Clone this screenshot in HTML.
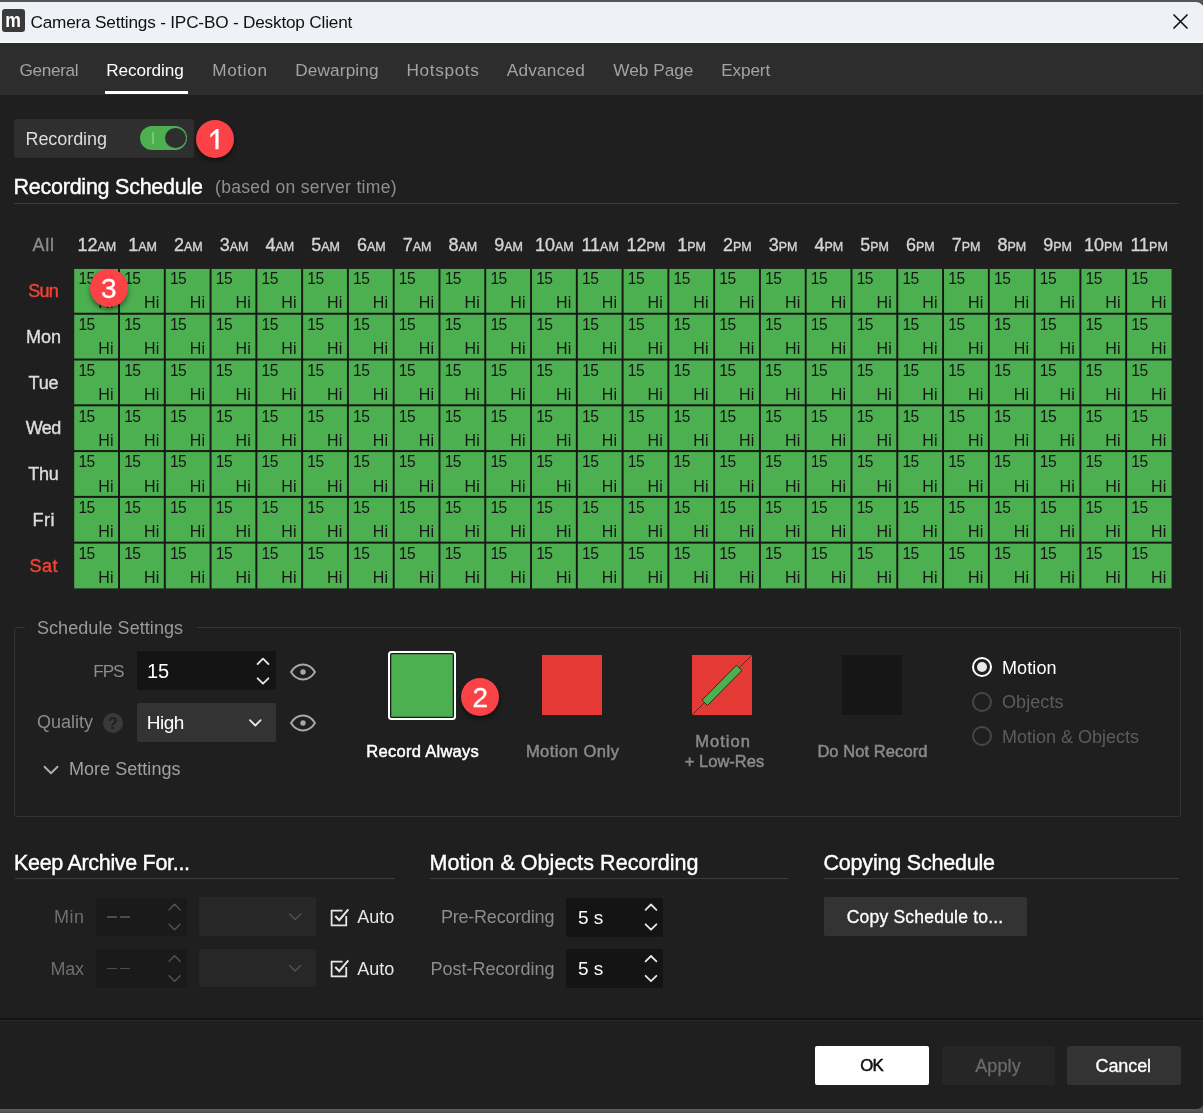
<!DOCTYPE html>
<html><head><meta charset="utf-8"><title>Camera Settings</title>
<style>
html,body{margin:0;padding:0;}
body{width:1203px;height:1113px;overflow:hidden;background:linear-gradient(#555 0,#555 3px,#4d4d4d 3px,#4d4d4d 1108px,#5a5a5a 1109px,#5a5a5a 1111px,#4e4e4e 1112px);position:relative;font-family:"Liberation Sans",sans-serif;}
#ct{position:absolute;left:0;top:0;width:1204px;height:1107px;will-change:transform;}
.t{position:absolute;white-space:nowrap;}
.r{position:absolute;}
svg{position:absolute;overflow:visible;}
#win{position:absolute;left:0;top:2px;width:1203.6px;height:1106.8px;background:#1f1f1f;border-radius:0 8px 8px 0;overflow:hidden;}
.c{position:absolute;width:44px;height:44px;color:#161616;font-size:16px;}
.c i{position:absolute;left:4.2px;top:2.4px;font-style:normal;line-height:16px;letter-spacing:-0.5px;font-size:15.6px;}
.c b{position:absolute;right:4.5px;bottom:1.5px;font-weight:400;line-height:16px;letter-spacing:0.2px;}
</style></head><body>

<div id="win"><div id="ct">
<div class="r" style="left:0px;top:0px;width:1204px;height:39px;background:#eef1f6;border-bottom:2px solid #f9fafc;"></div>
<div class="r" style="left:2px;top:7px;width:23px;height:23px;background:#3a3a3a;border-radius:3px;"></div>
<div class="t" style="top:2.50px;font-size:21px;color:#fff;font-weight:700;line-height:30px;left:-186.7px;width:400px;text-align:center;transform:scaleX(.84);">m</div>
<div class="t" style="top:5.00px;font-size:17.2px;color:#111;font-weight:400;line-height:30px;letter-spacing:-0.194px;left:30.5px;">Camera Settings - IPC-BO - Desktop Client</div>
<svg style="left:1173px;top:12px" width="15" height="15" viewBox="0 0 15 15"><path d="M0.5 0.5L14.5 14.5M14.5 0.5L0.5 14.5" stroke="#111" stroke-width="1.6" fill="none"/></svg>
<div class="r" style="left:0px;top:41px;width:1204px;height:51.5px;background:#2d2d2d;"></div>
<div class="t" style="top:53.00px;font-size:17.2px;color:#a3a3a3;font-weight:400;line-height:30px;letter-spacing:-0.348px;left:19.599999999999998px;">General</div>
<div class="t" style="top:53.00px;font-size:17.2px;color:#fff;font-weight:400;line-height:30px;letter-spacing:-0.087px;left:106.2px;">Recording</div>
<div class="t" style="top:53.00px;font-size:17.2px;color:#a3a3a3;font-weight:400;line-height:30px;letter-spacing:0.636px;left:212.2px;">Motion</div>
<div class="t" style="top:53.00px;font-size:17.2px;color:#a3a3a3;font-weight:400;line-height:30px;letter-spacing:0.16px;left:295.2px;">Dewarping</div>
<div class="t" style="top:53.00px;font-size:17.2px;color:#a3a3a3;font-weight:400;line-height:30px;letter-spacing:0.647px;left:406.5px;">Hotspots</div>
<div class="t" style="top:53.00px;font-size:17.2px;color:#a3a3a3;font-weight:400;line-height:30px;letter-spacing:0.243px;left:506.7px;">Advanced</div>
<div class="t" style="top:53.00px;font-size:17.2px;color:#a3a3a3;font-weight:400;line-height:30px;letter-spacing:0.043px;left:613.2px;">Web Page</div>
<div class="t" style="top:53.00px;font-size:17.2px;color:#a3a3a3;font-weight:400;line-height:30px;letter-spacing:-0.142px;left:721.2px;">Expert</div>
<div class="r" style="left:105px;top:89px;width:83px;height:3px;background:#fff;"></div>
<div class="r" style="left:14px;top:117px;width:179.5px;height:39px;background:#2f2f2f;border-radius:3px;"></div>
<div class="t" style="top:122.00px;font-size:18px;color:#dcdcdc;font-weight:400;line-height:30px;letter-spacing:-0.068px;left:25.5px;">Recording</div>
<div class="r" style="left:140px;top:123.8px;width:47.30000000000001px;height:24.299999999999997px;background:#4caf50;border-radius:12.5px;"></div>
<div class="r" style="left:164.7px;top:125.6px;width:21.0px;height:20.80000000000001px;background:#2e2e2e;border-radius:50%;"></div>
<div class="r" style="left:151.6px;top:130px;width:2.5999999999999943px;height:12.199999999999989px;background:#74c878;border-radius:1px;"></div>
<div class="t" style="top:170.00px;font-size:21.5px;color:#fff;font-weight:400;line-height:30px;letter-spacing:-0.242px;left:13.5px;-webkit-text-stroke:0.4px #fff;">Recording Schedule</div>
<div class="t" style="top:170.00px;font-size:17.5px;color:#8f8f8f;font-weight:400;line-height:30px;letter-spacing:0.307px;left:215px;">(based on server time)</div>
<div class="r" style="left:14px;top:201px;width:1165px;height:1px;background:#3a3a3a;"></div>
<div class="t" style="top:228.00px;font-size:18px;color:#8a8a8a;font-weight:400;line-height:30px;letter-spacing:0.747px;left:-156.3265px;width:400px;text-align:center;-webkit-text-stroke:0.4px #8a8a8a;">All</div>
<div class="t" style="top:228.00px;font-size:18px;color:#d4d4d4;font-weight:400;line-height:30px;left:-103.125px;width:400px;text-align:center;-webkit-text-stroke:0.35px #d4d4d4;">12<span style="font-size:12.5px">AM</span></div>
<div class="t" style="top:228.00px;font-size:18px;color:#d4d4d4;font-weight:400;line-height:30px;left:-57.375px;width:400px;text-align:center;-webkit-text-stroke:0.35px #d4d4d4;">1<span style="font-size:12.5px">AM</span></div>
<div class="t" style="top:228.00px;font-size:18px;color:#d4d4d4;font-weight:400;line-height:30px;left:-11.625px;width:400px;text-align:center;-webkit-text-stroke:0.35px #d4d4d4;">2<span style="font-size:12.5px">AM</span></div>
<div class="t" style="top:228.00px;font-size:18px;color:#d4d4d4;font-weight:400;line-height:30px;left:34.125px;width:400px;text-align:center;-webkit-text-stroke:0.35px #d4d4d4;">3<span style="font-size:12.5px">AM</span></div>
<div class="t" style="top:228.00px;font-size:18px;color:#d4d4d4;font-weight:400;line-height:30px;left:79.875px;width:400px;text-align:center;-webkit-text-stroke:0.35px #d4d4d4;">4<span style="font-size:12.5px">AM</span></div>
<div class="t" style="top:228.00px;font-size:18px;color:#d4d4d4;font-weight:400;line-height:30px;left:125.625px;width:400px;text-align:center;-webkit-text-stroke:0.35px #d4d4d4;">5<span style="font-size:12.5px">AM</span></div>
<div class="t" style="top:228.00px;font-size:18px;color:#d4d4d4;font-weight:400;line-height:30px;left:171.375px;width:400px;text-align:center;-webkit-text-stroke:0.35px #d4d4d4;">6<span style="font-size:12.5px">AM</span></div>
<div class="t" style="top:228.00px;font-size:18px;color:#d4d4d4;font-weight:400;line-height:30px;left:217.125px;width:400px;text-align:center;-webkit-text-stroke:0.35px #d4d4d4;">7<span style="font-size:12.5px">AM</span></div>
<div class="t" style="top:228.00px;font-size:18px;color:#d4d4d4;font-weight:400;line-height:30px;left:262.875px;width:400px;text-align:center;-webkit-text-stroke:0.35px #d4d4d4;">8<span style="font-size:12.5px">AM</span></div>
<div class="t" style="top:228.00px;font-size:18px;color:#d4d4d4;font-weight:400;line-height:30px;left:308.625px;width:400px;text-align:center;-webkit-text-stroke:0.35px #d4d4d4;">9<span style="font-size:12.5px">AM</span></div>
<div class="t" style="top:228.00px;font-size:18px;color:#d4d4d4;font-weight:400;line-height:30px;left:354.375px;width:400px;text-align:center;-webkit-text-stroke:0.35px #d4d4d4;">10<span style="font-size:12.5px">AM</span></div>
<div class="t" style="top:228.00px;font-size:18px;color:#d4d4d4;font-weight:400;line-height:30px;left:400.125px;width:400px;text-align:center;-webkit-text-stroke:0.35px #d4d4d4;">11<span style="font-size:12.5px">AM</span></div>
<div class="t" style="top:228.00px;font-size:18px;color:#d4d4d4;font-weight:400;line-height:30px;left:445.875px;width:400px;text-align:center;-webkit-text-stroke:0.35px #d4d4d4;">12<span style="font-size:12.5px">PM</span></div>
<div class="t" style="top:228.00px;font-size:18px;color:#d4d4d4;font-weight:400;line-height:30px;left:491.625px;width:400px;text-align:center;-webkit-text-stroke:0.35px #d4d4d4;">1<span style="font-size:12.5px">PM</span></div>
<div class="t" style="top:228.00px;font-size:18px;color:#d4d4d4;font-weight:400;line-height:30px;left:537.375px;width:400px;text-align:center;-webkit-text-stroke:0.35px #d4d4d4;">2<span style="font-size:12.5px">PM</span></div>
<div class="t" style="top:228.00px;font-size:18px;color:#d4d4d4;font-weight:400;line-height:30px;left:583.125px;width:400px;text-align:center;-webkit-text-stroke:0.35px #d4d4d4;">3<span style="font-size:12.5px">PM</span></div>
<div class="t" style="top:228.00px;font-size:18px;color:#d4d4d4;font-weight:400;line-height:30px;left:628.875px;width:400px;text-align:center;-webkit-text-stroke:0.35px #d4d4d4;">4<span style="font-size:12.5px">PM</span></div>
<div class="t" style="top:228.00px;font-size:18px;color:#d4d4d4;font-weight:400;line-height:30px;left:674.625px;width:400px;text-align:center;-webkit-text-stroke:0.35px #d4d4d4;">5<span style="font-size:12.5px">PM</span></div>
<div class="t" style="top:228.00px;font-size:18px;color:#d4d4d4;font-weight:400;line-height:30px;left:720.375px;width:400px;text-align:center;-webkit-text-stroke:0.35px #d4d4d4;">6<span style="font-size:12.5px">PM</span></div>
<div class="t" style="top:228.00px;font-size:18px;color:#d4d4d4;font-weight:400;line-height:30px;left:766.125px;width:400px;text-align:center;-webkit-text-stroke:0.35px #d4d4d4;">7<span style="font-size:12.5px">PM</span></div>
<div class="t" style="top:228.00px;font-size:18px;color:#d4d4d4;font-weight:400;line-height:30px;left:811.875px;width:400px;text-align:center;-webkit-text-stroke:0.35px #d4d4d4;">8<span style="font-size:12.5px">PM</span></div>
<div class="t" style="top:228.00px;font-size:18px;color:#d4d4d4;font-weight:400;line-height:30px;left:857.625px;width:400px;text-align:center;-webkit-text-stroke:0.35px #d4d4d4;">9<span style="font-size:12.5px">PM</span></div>
<div class="t" style="top:228.00px;font-size:18px;color:#d4d4d4;font-weight:400;line-height:30px;left:903.375px;width:400px;text-align:center;-webkit-text-stroke:0.35px #d4d4d4;">10<span style="font-size:12.5px">PM</span></div>
<div class="t" style="top:228.00px;font-size:18px;color:#d4d4d4;font-weight:400;line-height:30px;left:949.125px;width:400px;text-align:center;-webkit-text-stroke:0.35px #d4d4d4;">11<span style="font-size:12.5px">PM</span></div>
<div class="r" style="left:74.5px;top:267.5px;width:1097.0px;height:318.5px;background:#171717;"></div>
<svg style="left:0;top:0" width="1203" height="700"><rect x="74.20" y="266.95" width="43.85" height="43.80" fill="#4caf50"/><rect x="119.98" y="266.95" width="43.85" height="43.80" fill="#4caf50"/><rect x="165.76" y="266.95" width="43.85" height="43.80" fill="#4caf50"/><rect x="211.54" y="266.95" width="43.85" height="43.80" fill="#4caf50"/><rect x="257.32" y="266.95" width="43.85" height="43.80" fill="#4caf50"/><rect x="303.10" y="266.95" width="43.85" height="43.80" fill="#4caf50"/><rect x="348.88" y="266.95" width="43.85" height="43.80" fill="#4caf50"/><rect x="394.66" y="266.95" width="43.85" height="43.80" fill="#4caf50"/><rect x="440.44" y="266.95" width="43.85" height="43.80" fill="#4caf50"/><rect x="486.22" y="266.95" width="43.85" height="43.80" fill="#4caf50"/><rect x="532.00" y="266.95" width="43.85" height="43.80" fill="#4caf50"/><rect x="577.78" y="266.95" width="43.85" height="43.80" fill="#4caf50"/><rect x="623.56" y="266.95" width="43.85" height="43.80" fill="#4caf50"/><rect x="669.34" y="266.95" width="43.85" height="43.80" fill="#4caf50"/><rect x="715.12" y="266.95" width="43.85" height="43.80" fill="#4caf50"/><rect x="760.90" y="266.95" width="43.85" height="43.80" fill="#4caf50"/><rect x="806.68" y="266.95" width="43.85" height="43.80" fill="#4caf50"/><rect x="852.46" y="266.95" width="43.85" height="43.80" fill="#4caf50"/><rect x="898.24" y="266.95" width="43.85" height="43.80" fill="#4caf50"/><rect x="944.02" y="266.95" width="43.85" height="43.80" fill="#4caf50"/><rect x="989.80" y="266.95" width="43.85" height="43.80" fill="#4caf50"/><rect x="1035.58" y="266.95" width="43.85" height="43.80" fill="#4caf50"/><rect x="1081.36" y="266.95" width="43.85" height="43.80" fill="#4caf50"/><rect x="1127.14" y="266.95" width="44.46" height="43.80" fill="#4caf50"/><rect x="74.20" y="312.73" width="43.85" height="43.80" fill="#4caf50"/><rect x="119.98" y="312.73" width="43.85" height="43.80" fill="#4caf50"/><rect x="165.76" y="312.73" width="43.85" height="43.80" fill="#4caf50"/><rect x="211.54" y="312.73" width="43.85" height="43.80" fill="#4caf50"/><rect x="257.32" y="312.73" width="43.85" height="43.80" fill="#4caf50"/><rect x="303.10" y="312.73" width="43.85" height="43.80" fill="#4caf50"/><rect x="348.88" y="312.73" width="43.85" height="43.80" fill="#4caf50"/><rect x="394.66" y="312.73" width="43.85" height="43.80" fill="#4caf50"/><rect x="440.44" y="312.73" width="43.85" height="43.80" fill="#4caf50"/><rect x="486.22" y="312.73" width="43.85" height="43.80" fill="#4caf50"/><rect x="532.00" y="312.73" width="43.85" height="43.80" fill="#4caf50"/><rect x="577.78" y="312.73" width="43.85" height="43.80" fill="#4caf50"/><rect x="623.56" y="312.73" width="43.85" height="43.80" fill="#4caf50"/><rect x="669.34" y="312.73" width="43.85" height="43.80" fill="#4caf50"/><rect x="715.12" y="312.73" width="43.85" height="43.80" fill="#4caf50"/><rect x="760.90" y="312.73" width="43.85" height="43.80" fill="#4caf50"/><rect x="806.68" y="312.73" width="43.85" height="43.80" fill="#4caf50"/><rect x="852.46" y="312.73" width="43.85" height="43.80" fill="#4caf50"/><rect x="898.24" y="312.73" width="43.85" height="43.80" fill="#4caf50"/><rect x="944.02" y="312.73" width="43.85" height="43.80" fill="#4caf50"/><rect x="989.80" y="312.73" width="43.85" height="43.80" fill="#4caf50"/><rect x="1035.58" y="312.73" width="43.85" height="43.80" fill="#4caf50"/><rect x="1081.36" y="312.73" width="43.85" height="43.80" fill="#4caf50"/><rect x="1127.14" y="312.73" width="44.46" height="43.80" fill="#4caf50"/><rect x="74.20" y="358.51" width="43.85" height="43.80" fill="#4caf50"/><rect x="119.98" y="358.51" width="43.85" height="43.80" fill="#4caf50"/><rect x="165.76" y="358.51" width="43.85" height="43.80" fill="#4caf50"/><rect x="211.54" y="358.51" width="43.85" height="43.80" fill="#4caf50"/><rect x="257.32" y="358.51" width="43.85" height="43.80" fill="#4caf50"/><rect x="303.10" y="358.51" width="43.85" height="43.80" fill="#4caf50"/><rect x="348.88" y="358.51" width="43.85" height="43.80" fill="#4caf50"/><rect x="394.66" y="358.51" width="43.85" height="43.80" fill="#4caf50"/><rect x="440.44" y="358.51" width="43.85" height="43.80" fill="#4caf50"/><rect x="486.22" y="358.51" width="43.85" height="43.80" fill="#4caf50"/><rect x="532.00" y="358.51" width="43.85" height="43.80" fill="#4caf50"/><rect x="577.78" y="358.51" width="43.85" height="43.80" fill="#4caf50"/><rect x="623.56" y="358.51" width="43.85" height="43.80" fill="#4caf50"/><rect x="669.34" y="358.51" width="43.85" height="43.80" fill="#4caf50"/><rect x="715.12" y="358.51" width="43.85" height="43.80" fill="#4caf50"/><rect x="760.90" y="358.51" width="43.85" height="43.80" fill="#4caf50"/><rect x="806.68" y="358.51" width="43.85" height="43.80" fill="#4caf50"/><rect x="852.46" y="358.51" width="43.85" height="43.80" fill="#4caf50"/><rect x="898.24" y="358.51" width="43.85" height="43.80" fill="#4caf50"/><rect x="944.02" y="358.51" width="43.85" height="43.80" fill="#4caf50"/><rect x="989.80" y="358.51" width="43.85" height="43.80" fill="#4caf50"/><rect x="1035.58" y="358.51" width="43.85" height="43.80" fill="#4caf50"/><rect x="1081.36" y="358.51" width="43.85" height="43.80" fill="#4caf50"/><rect x="1127.14" y="358.51" width="44.46" height="43.80" fill="#4caf50"/><rect x="74.20" y="404.29" width="43.85" height="43.80" fill="#4caf50"/><rect x="119.98" y="404.29" width="43.85" height="43.80" fill="#4caf50"/><rect x="165.76" y="404.29" width="43.85" height="43.80" fill="#4caf50"/><rect x="211.54" y="404.29" width="43.85" height="43.80" fill="#4caf50"/><rect x="257.32" y="404.29" width="43.85" height="43.80" fill="#4caf50"/><rect x="303.10" y="404.29" width="43.85" height="43.80" fill="#4caf50"/><rect x="348.88" y="404.29" width="43.85" height="43.80" fill="#4caf50"/><rect x="394.66" y="404.29" width="43.85" height="43.80" fill="#4caf50"/><rect x="440.44" y="404.29" width="43.85" height="43.80" fill="#4caf50"/><rect x="486.22" y="404.29" width="43.85" height="43.80" fill="#4caf50"/><rect x="532.00" y="404.29" width="43.85" height="43.80" fill="#4caf50"/><rect x="577.78" y="404.29" width="43.85" height="43.80" fill="#4caf50"/><rect x="623.56" y="404.29" width="43.85" height="43.80" fill="#4caf50"/><rect x="669.34" y="404.29" width="43.85" height="43.80" fill="#4caf50"/><rect x="715.12" y="404.29" width="43.85" height="43.80" fill="#4caf50"/><rect x="760.90" y="404.29" width="43.85" height="43.80" fill="#4caf50"/><rect x="806.68" y="404.29" width="43.85" height="43.80" fill="#4caf50"/><rect x="852.46" y="404.29" width="43.85" height="43.80" fill="#4caf50"/><rect x="898.24" y="404.29" width="43.85" height="43.80" fill="#4caf50"/><rect x="944.02" y="404.29" width="43.85" height="43.80" fill="#4caf50"/><rect x="989.80" y="404.29" width="43.85" height="43.80" fill="#4caf50"/><rect x="1035.58" y="404.29" width="43.85" height="43.80" fill="#4caf50"/><rect x="1081.36" y="404.29" width="43.85" height="43.80" fill="#4caf50"/><rect x="1127.14" y="404.29" width="44.46" height="43.80" fill="#4caf50"/><rect x="74.20" y="450.07" width="43.85" height="43.80" fill="#4caf50"/><rect x="119.98" y="450.07" width="43.85" height="43.80" fill="#4caf50"/><rect x="165.76" y="450.07" width="43.85" height="43.80" fill="#4caf50"/><rect x="211.54" y="450.07" width="43.85" height="43.80" fill="#4caf50"/><rect x="257.32" y="450.07" width="43.85" height="43.80" fill="#4caf50"/><rect x="303.10" y="450.07" width="43.85" height="43.80" fill="#4caf50"/><rect x="348.88" y="450.07" width="43.85" height="43.80" fill="#4caf50"/><rect x="394.66" y="450.07" width="43.85" height="43.80" fill="#4caf50"/><rect x="440.44" y="450.07" width="43.85" height="43.80" fill="#4caf50"/><rect x="486.22" y="450.07" width="43.85" height="43.80" fill="#4caf50"/><rect x="532.00" y="450.07" width="43.85" height="43.80" fill="#4caf50"/><rect x="577.78" y="450.07" width="43.85" height="43.80" fill="#4caf50"/><rect x="623.56" y="450.07" width="43.85" height="43.80" fill="#4caf50"/><rect x="669.34" y="450.07" width="43.85" height="43.80" fill="#4caf50"/><rect x="715.12" y="450.07" width="43.85" height="43.80" fill="#4caf50"/><rect x="760.90" y="450.07" width="43.85" height="43.80" fill="#4caf50"/><rect x="806.68" y="450.07" width="43.85" height="43.80" fill="#4caf50"/><rect x="852.46" y="450.07" width="43.85" height="43.80" fill="#4caf50"/><rect x="898.24" y="450.07" width="43.85" height="43.80" fill="#4caf50"/><rect x="944.02" y="450.07" width="43.85" height="43.80" fill="#4caf50"/><rect x="989.80" y="450.07" width="43.85" height="43.80" fill="#4caf50"/><rect x="1035.58" y="450.07" width="43.85" height="43.80" fill="#4caf50"/><rect x="1081.36" y="450.07" width="43.85" height="43.80" fill="#4caf50"/><rect x="1127.14" y="450.07" width="44.46" height="43.80" fill="#4caf50"/><rect x="74.20" y="495.85" width="43.85" height="43.80" fill="#4caf50"/><rect x="119.98" y="495.85" width="43.85" height="43.80" fill="#4caf50"/><rect x="165.76" y="495.85" width="43.85" height="43.80" fill="#4caf50"/><rect x="211.54" y="495.85" width="43.85" height="43.80" fill="#4caf50"/><rect x="257.32" y="495.85" width="43.85" height="43.80" fill="#4caf50"/><rect x="303.10" y="495.85" width="43.85" height="43.80" fill="#4caf50"/><rect x="348.88" y="495.85" width="43.85" height="43.80" fill="#4caf50"/><rect x="394.66" y="495.85" width="43.85" height="43.80" fill="#4caf50"/><rect x="440.44" y="495.85" width="43.85" height="43.80" fill="#4caf50"/><rect x="486.22" y="495.85" width="43.85" height="43.80" fill="#4caf50"/><rect x="532.00" y="495.85" width="43.85" height="43.80" fill="#4caf50"/><rect x="577.78" y="495.85" width="43.85" height="43.80" fill="#4caf50"/><rect x="623.56" y="495.85" width="43.85" height="43.80" fill="#4caf50"/><rect x="669.34" y="495.85" width="43.85" height="43.80" fill="#4caf50"/><rect x="715.12" y="495.85" width="43.85" height="43.80" fill="#4caf50"/><rect x="760.90" y="495.85" width="43.85" height="43.80" fill="#4caf50"/><rect x="806.68" y="495.85" width="43.85" height="43.80" fill="#4caf50"/><rect x="852.46" y="495.85" width="43.85" height="43.80" fill="#4caf50"/><rect x="898.24" y="495.85" width="43.85" height="43.80" fill="#4caf50"/><rect x="944.02" y="495.85" width="43.85" height="43.80" fill="#4caf50"/><rect x="989.80" y="495.85" width="43.85" height="43.80" fill="#4caf50"/><rect x="1035.58" y="495.85" width="43.85" height="43.80" fill="#4caf50"/><rect x="1081.36" y="495.85" width="43.85" height="43.80" fill="#4caf50"/><rect x="1127.14" y="495.85" width="44.46" height="43.80" fill="#4caf50"/><rect x="74.20" y="541.63" width="43.85" height="44.77" fill="#4caf50"/><rect x="119.98" y="541.63" width="43.85" height="44.77" fill="#4caf50"/><rect x="165.76" y="541.63" width="43.85" height="44.77" fill="#4caf50"/><rect x="211.54" y="541.63" width="43.85" height="44.77" fill="#4caf50"/><rect x="257.32" y="541.63" width="43.85" height="44.77" fill="#4caf50"/><rect x="303.10" y="541.63" width="43.85" height="44.77" fill="#4caf50"/><rect x="348.88" y="541.63" width="43.85" height="44.77" fill="#4caf50"/><rect x="394.66" y="541.63" width="43.85" height="44.77" fill="#4caf50"/><rect x="440.44" y="541.63" width="43.85" height="44.77" fill="#4caf50"/><rect x="486.22" y="541.63" width="43.85" height="44.77" fill="#4caf50"/><rect x="532.00" y="541.63" width="43.85" height="44.77" fill="#4caf50"/><rect x="577.78" y="541.63" width="43.85" height="44.77" fill="#4caf50"/><rect x="623.56" y="541.63" width="43.85" height="44.77" fill="#4caf50"/><rect x="669.34" y="541.63" width="43.85" height="44.77" fill="#4caf50"/><rect x="715.12" y="541.63" width="43.85" height="44.77" fill="#4caf50"/><rect x="760.90" y="541.63" width="43.85" height="44.77" fill="#4caf50"/><rect x="806.68" y="541.63" width="43.85" height="44.77" fill="#4caf50"/><rect x="852.46" y="541.63" width="43.85" height="44.77" fill="#4caf50"/><rect x="898.24" y="541.63" width="43.85" height="44.77" fill="#4caf50"/><rect x="944.02" y="541.63" width="43.85" height="44.77" fill="#4caf50"/><rect x="989.80" y="541.63" width="43.85" height="44.77" fill="#4caf50"/><rect x="1035.58" y="541.63" width="43.85" height="44.77" fill="#4caf50"/><rect x="1081.36" y="541.63" width="43.85" height="44.77" fill="#4caf50"/><rect x="1127.14" y="541.63" width="44.46" height="44.77" fill="#4caf50"/></svg>
<div class="t" style="top:274.15px;font-size:18px;color:#f44336;font-weight:400;line-height:30px;letter-spacing:-0.863px;left:-156.9315px;width:400px;text-align:center;-webkit-text-stroke:0.4px #f44336;">Sun</div>
<div class="c" style="left:74.20px;top:266.95px;"><i>15</i><b>Hi</b></div>
<div class="c" style="left:119.98px;top:266.95px;"><i>15</i><b>Hi</b></div>
<div class="c" style="left:165.76px;top:266.95px;"><i>15</i><b>Hi</b></div>
<div class="c" style="left:211.54px;top:266.95px;"><i>15</i><b>Hi</b></div>
<div class="c" style="left:257.32px;top:266.95px;"><i>15</i><b>Hi</b></div>
<div class="c" style="left:303.10px;top:266.95px;"><i>15</i><b>Hi</b></div>
<div class="c" style="left:348.88px;top:266.95px;"><i>15</i><b>Hi</b></div>
<div class="c" style="left:394.66px;top:266.95px;"><i>15</i><b>Hi</b></div>
<div class="c" style="left:440.44px;top:266.95px;"><i>15</i><b>Hi</b></div>
<div class="c" style="left:486.22px;top:266.95px;"><i>15</i><b>Hi</b></div>
<div class="c" style="left:532.00px;top:266.95px;"><i>15</i><b>Hi</b></div>
<div class="c" style="left:577.78px;top:266.95px;"><i>15</i><b>Hi</b></div>
<div class="c" style="left:623.56px;top:266.95px;"><i>15</i><b>Hi</b></div>
<div class="c" style="left:669.34px;top:266.95px;"><i>15</i><b>Hi</b></div>
<div class="c" style="left:715.12px;top:266.95px;"><i>15</i><b>Hi</b></div>
<div class="c" style="left:760.90px;top:266.95px;"><i>15</i><b>Hi</b></div>
<div class="c" style="left:806.68px;top:266.95px;"><i>15</i><b>Hi</b></div>
<div class="c" style="left:852.46px;top:266.95px;"><i>15</i><b>Hi</b></div>
<div class="c" style="left:898.24px;top:266.95px;"><i>15</i><b>Hi</b></div>
<div class="c" style="left:944.02px;top:266.95px;"><i>15</i><b>Hi</b></div>
<div class="c" style="left:989.80px;top:266.95px;"><i>15</i><b>Hi</b></div>
<div class="c" style="left:1035.58px;top:266.95px;"><i>15</i><b>Hi</b></div>
<div class="c" style="left:1081.36px;top:266.95px;"><i>15</i><b>Hi</b></div>
<div class="c" style="left:1127.14px;top:266.95px;"><i>15</i><b>Hi</b></div>
<div class="t" style="top:319.93px;font-size:18px;color:#dcdcdc;font-weight:400;line-height:30px;letter-spacing:-0.006px;left:-156.503px;width:400px;text-align:center;-webkit-text-stroke:0.4px #dcdcdc;">Mon</div>
<div class="c" style="left:74.20px;top:312.73px;"><i>15</i><b>Hi</b></div>
<div class="c" style="left:119.98px;top:312.73px;"><i>15</i><b>Hi</b></div>
<div class="c" style="left:165.76px;top:312.73px;"><i>15</i><b>Hi</b></div>
<div class="c" style="left:211.54px;top:312.73px;"><i>15</i><b>Hi</b></div>
<div class="c" style="left:257.32px;top:312.73px;"><i>15</i><b>Hi</b></div>
<div class="c" style="left:303.10px;top:312.73px;"><i>15</i><b>Hi</b></div>
<div class="c" style="left:348.88px;top:312.73px;"><i>15</i><b>Hi</b></div>
<div class="c" style="left:394.66px;top:312.73px;"><i>15</i><b>Hi</b></div>
<div class="c" style="left:440.44px;top:312.73px;"><i>15</i><b>Hi</b></div>
<div class="c" style="left:486.22px;top:312.73px;"><i>15</i><b>Hi</b></div>
<div class="c" style="left:532.00px;top:312.73px;"><i>15</i><b>Hi</b></div>
<div class="c" style="left:577.78px;top:312.73px;"><i>15</i><b>Hi</b></div>
<div class="c" style="left:623.56px;top:312.73px;"><i>15</i><b>Hi</b></div>
<div class="c" style="left:669.34px;top:312.73px;"><i>15</i><b>Hi</b></div>
<div class="c" style="left:715.12px;top:312.73px;"><i>15</i><b>Hi</b></div>
<div class="c" style="left:760.90px;top:312.73px;"><i>15</i><b>Hi</b></div>
<div class="c" style="left:806.68px;top:312.73px;"><i>15</i><b>Hi</b></div>
<div class="c" style="left:852.46px;top:312.73px;"><i>15</i><b>Hi</b></div>
<div class="c" style="left:898.24px;top:312.73px;"><i>15</i><b>Hi</b></div>
<div class="c" style="left:944.02px;top:312.73px;"><i>15</i><b>Hi</b></div>
<div class="c" style="left:989.80px;top:312.73px;"><i>15</i><b>Hi</b></div>
<div class="c" style="left:1035.58px;top:312.73px;"><i>15</i><b>Hi</b></div>
<div class="c" style="left:1081.36px;top:312.73px;"><i>15</i><b>Hi</b></div>
<div class="c" style="left:1127.14px;top:312.73px;"><i>15</i><b>Hi</b></div>
<div class="t" style="top:365.71px;font-size:18px;color:#dcdcdc;font-weight:400;line-height:30px;letter-spacing:-0.173px;left:-156.5865px;width:400px;text-align:center;-webkit-text-stroke:0.4px #dcdcdc;">Tue</div>
<div class="c" style="left:74.20px;top:358.51px;"><i>15</i><b>Hi</b></div>
<div class="c" style="left:119.98px;top:358.51px;"><i>15</i><b>Hi</b></div>
<div class="c" style="left:165.76px;top:358.51px;"><i>15</i><b>Hi</b></div>
<div class="c" style="left:211.54px;top:358.51px;"><i>15</i><b>Hi</b></div>
<div class="c" style="left:257.32px;top:358.51px;"><i>15</i><b>Hi</b></div>
<div class="c" style="left:303.10px;top:358.51px;"><i>15</i><b>Hi</b></div>
<div class="c" style="left:348.88px;top:358.51px;"><i>15</i><b>Hi</b></div>
<div class="c" style="left:394.66px;top:358.51px;"><i>15</i><b>Hi</b></div>
<div class="c" style="left:440.44px;top:358.51px;"><i>15</i><b>Hi</b></div>
<div class="c" style="left:486.22px;top:358.51px;"><i>15</i><b>Hi</b></div>
<div class="c" style="left:532.00px;top:358.51px;"><i>15</i><b>Hi</b></div>
<div class="c" style="left:577.78px;top:358.51px;"><i>15</i><b>Hi</b></div>
<div class="c" style="left:623.56px;top:358.51px;"><i>15</i><b>Hi</b></div>
<div class="c" style="left:669.34px;top:358.51px;"><i>15</i><b>Hi</b></div>
<div class="c" style="left:715.12px;top:358.51px;"><i>15</i><b>Hi</b></div>
<div class="c" style="left:760.90px;top:358.51px;"><i>15</i><b>Hi</b></div>
<div class="c" style="left:806.68px;top:358.51px;"><i>15</i><b>Hi</b></div>
<div class="c" style="left:852.46px;top:358.51px;"><i>15</i><b>Hi</b></div>
<div class="c" style="left:898.24px;top:358.51px;"><i>15</i><b>Hi</b></div>
<div class="c" style="left:944.02px;top:358.51px;"><i>15</i><b>Hi</b></div>
<div class="c" style="left:989.80px;top:358.51px;"><i>15</i><b>Hi</b></div>
<div class="c" style="left:1035.58px;top:358.51px;"><i>15</i><b>Hi</b></div>
<div class="c" style="left:1081.36px;top:358.51px;"><i>15</i><b>Hi</b></div>
<div class="c" style="left:1127.14px;top:358.51px;"><i>15</i><b>Hi</b></div>
<div class="t" style="top:411.49px;font-size:18px;color:#dcdcdc;font-weight:400;line-height:30px;letter-spacing:-0.542px;left:-156.77100000000002px;width:400px;text-align:center;-webkit-text-stroke:0.4px #dcdcdc;">Wed</div>
<div class="c" style="left:74.20px;top:404.29px;"><i>15</i><b>Hi</b></div>
<div class="c" style="left:119.98px;top:404.29px;"><i>15</i><b>Hi</b></div>
<div class="c" style="left:165.76px;top:404.29px;"><i>15</i><b>Hi</b></div>
<div class="c" style="left:211.54px;top:404.29px;"><i>15</i><b>Hi</b></div>
<div class="c" style="left:257.32px;top:404.29px;"><i>15</i><b>Hi</b></div>
<div class="c" style="left:303.10px;top:404.29px;"><i>15</i><b>Hi</b></div>
<div class="c" style="left:348.88px;top:404.29px;"><i>15</i><b>Hi</b></div>
<div class="c" style="left:394.66px;top:404.29px;"><i>15</i><b>Hi</b></div>
<div class="c" style="left:440.44px;top:404.29px;"><i>15</i><b>Hi</b></div>
<div class="c" style="left:486.22px;top:404.29px;"><i>15</i><b>Hi</b></div>
<div class="c" style="left:532.00px;top:404.29px;"><i>15</i><b>Hi</b></div>
<div class="c" style="left:577.78px;top:404.29px;"><i>15</i><b>Hi</b></div>
<div class="c" style="left:623.56px;top:404.29px;"><i>15</i><b>Hi</b></div>
<div class="c" style="left:669.34px;top:404.29px;"><i>15</i><b>Hi</b></div>
<div class="c" style="left:715.12px;top:404.29px;"><i>15</i><b>Hi</b></div>
<div class="c" style="left:760.90px;top:404.29px;"><i>15</i><b>Hi</b></div>
<div class="c" style="left:806.68px;top:404.29px;"><i>15</i><b>Hi</b></div>
<div class="c" style="left:852.46px;top:404.29px;"><i>15</i><b>Hi</b></div>
<div class="c" style="left:898.24px;top:404.29px;"><i>15</i><b>Hi</b></div>
<div class="c" style="left:944.02px;top:404.29px;"><i>15</i><b>Hi</b></div>
<div class="c" style="left:989.80px;top:404.29px;"><i>15</i><b>Hi</b></div>
<div class="c" style="left:1035.58px;top:404.29px;"><i>15</i><b>Hi</b></div>
<div class="c" style="left:1081.36px;top:404.29px;"><i>15</i><b>Hi</b></div>
<div class="c" style="left:1127.14px;top:404.29px;"><i>15</i><b>Hi</b></div>
<div class="t" style="top:457.27px;font-size:18px;color:#dcdcdc;font-weight:400;line-height:30px;letter-spacing:-0.207px;left:-156.6035px;width:400px;text-align:center;-webkit-text-stroke:0.4px #dcdcdc;">Thu</div>
<div class="c" style="left:74.20px;top:450.07px;"><i>15</i><b>Hi</b></div>
<div class="c" style="left:119.98px;top:450.07px;"><i>15</i><b>Hi</b></div>
<div class="c" style="left:165.76px;top:450.07px;"><i>15</i><b>Hi</b></div>
<div class="c" style="left:211.54px;top:450.07px;"><i>15</i><b>Hi</b></div>
<div class="c" style="left:257.32px;top:450.07px;"><i>15</i><b>Hi</b></div>
<div class="c" style="left:303.10px;top:450.07px;"><i>15</i><b>Hi</b></div>
<div class="c" style="left:348.88px;top:450.07px;"><i>15</i><b>Hi</b></div>
<div class="c" style="left:394.66px;top:450.07px;"><i>15</i><b>Hi</b></div>
<div class="c" style="left:440.44px;top:450.07px;"><i>15</i><b>Hi</b></div>
<div class="c" style="left:486.22px;top:450.07px;"><i>15</i><b>Hi</b></div>
<div class="c" style="left:532.00px;top:450.07px;"><i>15</i><b>Hi</b></div>
<div class="c" style="left:577.78px;top:450.07px;"><i>15</i><b>Hi</b></div>
<div class="c" style="left:623.56px;top:450.07px;"><i>15</i><b>Hi</b></div>
<div class="c" style="left:669.34px;top:450.07px;"><i>15</i><b>Hi</b></div>
<div class="c" style="left:715.12px;top:450.07px;"><i>15</i><b>Hi</b></div>
<div class="c" style="left:760.90px;top:450.07px;"><i>15</i><b>Hi</b></div>
<div class="c" style="left:806.68px;top:450.07px;"><i>15</i><b>Hi</b></div>
<div class="c" style="left:852.46px;top:450.07px;"><i>15</i><b>Hi</b></div>
<div class="c" style="left:898.24px;top:450.07px;"><i>15</i><b>Hi</b></div>
<div class="c" style="left:944.02px;top:450.07px;"><i>15</i><b>Hi</b></div>
<div class="c" style="left:989.80px;top:450.07px;"><i>15</i><b>Hi</b></div>
<div class="c" style="left:1035.58px;top:450.07px;"><i>15</i><b>Hi</b></div>
<div class="c" style="left:1081.36px;top:450.07px;"><i>15</i><b>Hi</b></div>
<div class="c" style="left:1127.14px;top:450.07px;"><i>15</i><b>Hi</b></div>
<div class="t" style="top:503.05px;font-size:18px;color:#dcdcdc;font-weight:400;line-height:30px;letter-spacing:0.407px;left:-156.2965px;width:400px;text-align:center;-webkit-text-stroke:0.4px #dcdcdc;">Fri</div>
<div class="c" style="left:74.20px;top:495.85px;"><i>15</i><b>Hi</b></div>
<div class="c" style="left:119.98px;top:495.85px;"><i>15</i><b>Hi</b></div>
<div class="c" style="left:165.76px;top:495.85px;"><i>15</i><b>Hi</b></div>
<div class="c" style="left:211.54px;top:495.85px;"><i>15</i><b>Hi</b></div>
<div class="c" style="left:257.32px;top:495.85px;"><i>15</i><b>Hi</b></div>
<div class="c" style="left:303.10px;top:495.85px;"><i>15</i><b>Hi</b></div>
<div class="c" style="left:348.88px;top:495.85px;"><i>15</i><b>Hi</b></div>
<div class="c" style="left:394.66px;top:495.85px;"><i>15</i><b>Hi</b></div>
<div class="c" style="left:440.44px;top:495.85px;"><i>15</i><b>Hi</b></div>
<div class="c" style="left:486.22px;top:495.85px;"><i>15</i><b>Hi</b></div>
<div class="c" style="left:532.00px;top:495.85px;"><i>15</i><b>Hi</b></div>
<div class="c" style="left:577.78px;top:495.85px;"><i>15</i><b>Hi</b></div>
<div class="c" style="left:623.56px;top:495.85px;"><i>15</i><b>Hi</b></div>
<div class="c" style="left:669.34px;top:495.85px;"><i>15</i><b>Hi</b></div>
<div class="c" style="left:715.12px;top:495.85px;"><i>15</i><b>Hi</b></div>
<div class="c" style="left:760.90px;top:495.85px;"><i>15</i><b>Hi</b></div>
<div class="c" style="left:806.68px;top:495.85px;"><i>15</i><b>Hi</b></div>
<div class="c" style="left:852.46px;top:495.85px;"><i>15</i><b>Hi</b></div>
<div class="c" style="left:898.24px;top:495.85px;"><i>15</i><b>Hi</b></div>
<div class="c" style="left:944.02px;top:495.85px;"><i>15</i><b>Hi</b></div>
<div class="c" style="left:989.80px;top:495.85px;"><i>15</i><b>Hi</b></div>
<div class="c" style="left:1035.58px;top:495.85px;"><i>15</i><b>Hi</b></div>
<div class="c" style="left:1081.36px;top:495.85px;"><i>15</i><b>Hi</b></div>
<div class="c" style="left:1127.14px;top:495.85px;"><i>15</i><b>Hi</b></div>
<div class="t" style="top:548.83px;font-size:18px;color:#f44336;font-weight:400;line-height:30px;letter-spacing:0.492px;left:-156.254px;width:400px;text-align:center;-webkit-text-stroke:0.4px #f44336;">Sat</div>
<div class="c" style="left:74.20px;top:541.63px;"><i>15</i><b>Hi</b></div>
<div class="c" style="left:119.98px;top:541.63px;"><i>15</i><b>Hi</b></div>
<div class="c" style="left:165.76px;top:541.63px;"><i>15</i><b>Hi</b></div>
<div class="c" style="left:211.54px;top:541.63px;"><i>15</i><b>Hi</b></div>
<div class="c" style="left:257.32px;top:541.63px;"><i>15</i><b>Hi</b></div>
<div class="c" style="left:303.10px;top:541.63px;"><i>15</i><b>Hi</b></div>
<div class="c" style="left:348.88px;top:541.63px;"><i>15</i><b>Hi</b></div>
<div class="c" style="left:394.66px;top:541.63px;"><i>15</i><b>Hi</b></div>
<div class="c" style="left:440.44px;top:541.63px;"><i>15</i><b>Hi</b></div>
<div class="c" style="left:486.22px;top:541.63px;"><i>15</i><b>Hi</b></div>
<div class="c" style="left:532.00px;top:541.63px;"><i>15</i><b>Hi</b></div>
<div class="c" style="left:577.78px;top:541.63px;"><i>15</i><b>Hi</b></div>
<div class="c" style="left:623.56px;top:541.63px;"><i>15</i><b>Hi</b></div>
<div class="c" style="left:669.34px;top:541.63px;"><i>15</i><b>Hi</b></div>
<div class="c" style="left:715.12px;top:541.63px;"><i>15</i><b>Hi</b></div>
<div class="c" style="left:760.90px;top:541.63px;"><i>15</i><b>Hi</b></div>
<div class="c" style="left:806.68px;top:541.63px;"><i>15</i><b>Hi</b></div>
<div class="c" style="left:852.46px;top:541.63px;"><i>15</i><b>Hi</b></div>
<div class="c" style="left:898.24px;top:541.63px;"><i>15</i><b>Hi</b></div>
<div class="c" style="left:944.02px;top:541.63px;"><i>15</i><b>Hi</b></div>
<div class="c" style="left:989.80px;top:541.63px;"><i>15</i><b>Hi</b></div>
<div class="c" style="left:1035.58px;top:541.63px;"><i>15</i><b>Hi</b></div>
<div class="c" style="left:1081.36px;top:541.63px;"><i>15</i><b>Hi</b></div>
<div class="c" style="left:1127.14px;top:541.63px;"><i>15</i><b>Hi</b></div>
<div class="r" style="left:196.4px;top:117.6px;width:38px;height:38px;border-radius:50%;background:#fb4347;box-shadow:0 3px 5px rgba(0,0,0,.45);"></div><svg style="left:215.4px;top:136.6px" width="1" height="1"><path d="M3.6 -9.9V10.3H0.4V-5.9L-4.7 -1.2V-4.6L1.2 -9.9Z" fill="#fff"/></svg>
<div class="r" style="left:89.9px;top:267.2px;width:38px;height:38px;border-radius:50%;background:#fb4347;box-shadow:0 3px 5px rgba(0,0,0,.45);color:#fff;font-size:28px;line-height:39px;text-align:center;-webkit-text-stroke:0.3px #fff;">3</div>
<div class="r" style="left:14px;top:625px;width:1167px;height:190px;background:transparent;border:1px solid #343434;border-radius:3px;box-sizing:border-box;"></div>
<div class="r" style="left:25px;top:614px;width:172px;height:24px;background:#1f1f1f;"></div>
<div class="t" style="top:611.00px;font-size:18px;color:#9a9a9a;font-weight:400;line-height:30px;letter-spacing:0.057px;left:37px;">Schedule Settings</div>
<div class="t" style="top:654.00px;font-size:17.2px;color:#8c8c8c;font-weight:400;line-height:30px;letter-spacing:-1.076px;right:1080.576px;">FPS</div>
<div class="r" style="left:137px;top:649px;width:139px;height:39px;background:#141414;border-radius:2px;"></div>
<div class="t" style="top:654.00px;font-size:20px;color:#fff;font-weight:400;line-height:30px;left:147px;">15</div>
<svg style="left:0;top:0" width="1" height="1"><path d="M257.6 662.0L263 656.5999999999999L268.40000000000003 662.0" stroke="#e6e6e6" stroke-width="1.8" fill="none" stroke-linecap="round" stroke-linejoin="round"/></svg>
<svg style="left:0;top:0" width="1" height="1"><path d="M257.6 676.3L263 681.7L268.40000000000003 676.3" stroke="#e6e6e6" stroke-width="1.8" fill="none" stroke-linecap="round" stroke-linejoin="round"/></svg>
<svg style="left:288.7px;top:660.6999999999999px" width="28" height="18" viewBox="0 0 28 18"><path d="M2 9C5.4 3.6 9.6 1.6 14 1.6S22.6 3.6 26 9C22.6 14.4 18.4 16.4 14 16.4S5.4 14.4 2 9Z" stroke="#a8a8a8" stroke-width="2" fill="none" stroke-linejoin="round"/><circle cx="14" cy="9" r="2.7" fill="#a8a8a8"/></svg>
<div class="t" style="top:705.00px;font-size:18px;color:#8c8c8c;font-weight:400;line-height:30px;left:37px;">Quality</div>
<div class="r" style="left:103px;top:711px;width:20px;height:20px;background:#3a3a3a;border-radius:50%;"></div>
<div class="t" style="top:706.50px;font-size:16px;color:#1f1f1f;font-weight:700;line-height:30px;left:-87px;width:400px;text-align:center;">?</div>
<div class="r" style="left:137px;top:701px;width:139px;height:39px;background:#333333;border-radius:2px;"></div>
<div class="t" style="top:705.50px;font-size:19px;color:#fff;font-weight:400;line-height:30px;letter-spacing:-0.525px;left:146.8px;">High</div>
<svg style="left:0;top:0" width="1" height="1"><path d="M249.9 718.0999999999999L255.3 723.5L260.7 718.0999999999999" stroke="#e6e6e6" stroke-width="1.8" fill="none" stroke-linecap="round" stroke-linejoin="round"/></svg>
<svg style="left:288.7px;top:712.1999999999999px" width="28" height="18" viewBox="0 0 28 18"><path d="M2 9C5.4 3.6 9.6 1.6 14 1.6S22.6 3.6 26 9C22.6 14.4 18.4 16.4 14 16.4S5.4 14.4 2 9Z" stroke="#a8a8a8" stroke-width="2" fill="none" stroke-linejoin="round"/><circle cx="14" cy="9" r="2.7" fill="#a8a8a8"/></svg>
<svg style="left:0;top:0" width="1" height="1"><path d="M44.5 764.75L51 771.25L57.5 764.75" stroke="#b0b0b0" stroke-width="1.8" fill="none" stroke-linecap="round" stroke-linejoin="round"/></svg>
<div class="t" style="top:752.00px;font-size:18px;color:#a0a0a0;font-weight:400;line-height:30px;letter-spacing:0.038px;left:69px;">More Settings</div>
<div class="r" style="left:388px;top:649px;width:68px;height:69px;background:#4caf50;border:2.7px solid #fff;border-radius:3.5px;box-sizing:border-box;box-shadow:inset 0 0 0 1.3px #1c1c1c;"></div>
<div class="t" style="top:734.30px;font-size:16.5px;color:#fff;font-weight:400;line-height:30px;letter-spacing:0.281px;left:222.7405px;width:400px;text-align:center;-webkit-text-stroke:0.5px #fff;">Record Always</div>
<div class="r" style="left:461.3px;top:676.2px;width:38px;height:38px;border-radius:50%;background:#fb4347;box-shadow:0 3px 5px rgba(0,0,0,.45);color:#fff;font-size:28px;line-height:39px;text-align:center;-webkit-text-stroke:0.3px #fff;">2</div>
<div class="r" style="left:542px;top:653px;width:60px;height:60px;background:#e53935;"></div>
<div class="t" style="top:734.30px;font-size:16.5px;color:#8a8a8a;font-weight:400;line-height:30px;letter-spacing:0.497px;left:372.6485px;width:400px;text-align:center;-webkit-text-stroke:0.5px #8a8a8a;">Motion Only</div>
<div class="r" style="left:692px;top:653px;width:60px;height:60px;background:#e53935;"></div>
<svg style="left:692px;top:653px" width="60" height="60" viewBox="0 0 60 60"><path d="M0 60L60 0" stroke="#7a1f1c" stroke-width="1"/><g transform="rotate(-45.5 30 30.3)"><rect x="5.5" y="26.5" width="49" height="7.6" fill="#4caf50" stroke="#2a2a1c" stroke-width="0.9"/></g></svg>
<div class="t" style="top:723.80px;font-size:16.5px;color:#8a8a8a;font-weight:400;line-height:30px;letter-spacing:0.996px;left:523.0980000000001px;width:400px;text-align:center;-webkit-text-stroke:0.5px #8a8a8a;">Motion</div>
<div class="t" style="top:744.20px;font-size:16.5px;color:#8a8a8a;font-weight:400;line-height:30px;letter-spacing:0.022px;left:524.511px;width:400px;text-align:center;-webkit-text-stroke:0.5px #8a8a8a;">+ Low-Res</div>
<div class="r" style="left:842px;top:653px;width:60px;height:60px;background:#161616;"></div>
<div class="t" style="top:734.30px;font-size:16.5px;color:#8a8a8a;font-weight:400;line-height:30px;letter-spacing:0.073px;left:672.4365px;width:400px;text-align:center;-webkit-text-stroke:0.5px #8a8a8a;">Do Not Record</div>
<div class="r" style="left:971.5px;top:655.3px;width:20px;height:20px;border-radius:50%;border:2px solid #fff;box-sizing:border-box;"></div><div class="r" style="left:976.5px;top:660.3px;width:10px;height:10px;border-radius:50%;background:#e8e8e8;"></div>
<div class="t" style="top:651.00px;font-size:18px;color:#fff;font-weight:400;line-height:30px;letter-spacing:0.095px;left:1002px;">Motion</div>
<div class="r" style="left:971.5px;top:690px;width:20px;height:20px;border-radius:50%;border:2px solid #474747;box-sizing:border-box;"></div>
<div class="t" style="top:685.30px;font-size:18px;color:#5c5c5c;font-weight:400;line-height:30px;letter-spacing:0.08px;left:1002px;">Objects</div>
<div class="r" style="left:971.5px;top:724px;width:20px;height:20px;border-radius:50%;border:2px solid #474747;box-sizing:border-box;"></div>
<div class="t" style="top:720.00px;font-size:18px;color:#5c5c5c;font-weight:400;line-height:30px;letter-spacing:-0.003px;left:1002px;">Motion &amp; Objects</div>
<div class="t" style="top:846.00px;font-size:21.5px;color:#fff;font-weight:400;line-height:30px;letter-spacing:-0.313px;left:14.0px;-webkit-text-stroke:0.4px #fff;">Keep Archive For...</div><div class="r" style="left:14.5px;top:876px;width:380.5px;height:1px;background:#3c3c3c;"></div>
<div class="t" style="top:846.00px;font-size:21.5px;color:#fff;font-weight:400;line-height:30px;letter-spacing:0.053px;left:429.5px;-webkit-text-stroke:0.4px #fff;">Motion &amp; Objects Recording</div><div class="r" style="left:430px;top:876px;width:358px;height:1px;background:#3c3c3c;"></div>
<div class="t" style="top:846.00px;font-size:21.5px;color:#fff;font-weight:400;line-height:30px;letter-spacing:-0.2px;left:823.5px;-webkit-text-stroke:0.4px #fff;">Copying Schedule</div><div class="r" style="left:824px;top:876px;width:355px;height:1px;background:#3c3c3c;"></div>
<div class="t" style="top:900.00px;font-size:18px;color:#6e6e6e;font-weight:400;line-height:30px;letter-spacing:0.499px;right:1119.501px;">Min</div>
<div class="r" style="left:95.5px;top:895.8px;width:91.80000000000001px;height:38.40000000000009px;background:#1a1a1a;border-radius:2px;"></div>
<div class="r" style="left:107px;top:914.2px;width:10px;height:1.3999999999999773px;background:#4c4c4c;"></div>
<div class="r" style="left:120px;top:914.2px;width:10px;height:1.3999999999999773px;background:#4c4c4c;"></div>
<svg style="left:0;top:0" width="1" height="1"><path d="M169.1 907.75L174.6 902.25L180.1 907.75" stroke="#505050" stroke-width="1.6" fill="none" stroke-linecap="round" stroke-linejoin="round"/></svg>
<svg style="left:0;top:0" width="1" height="1"><path d="M169.1 922.25L174.6 927.75L180.1 922.25" stroke="#505050" stroke-width="1.6" fill="none" stroke-linecap="round" stroke-linejoin="round"/></svg>
<div class="r" style="left:199px;top:895.4px;width:117px;height:38.60000000000002px;background:#272727;border-radius:2px;"></div>
<svg style="left:0;top:0" width="1" height="1"><path d="M289.6 912.05L295.1 917.55L300.6 912.05" stroke="#505050" stroke-width="1.6" fill="none" stroke-linecap="round" stroke-linejoin="round"/></svg>
<svg style="left:328.6px;top:903.8px" width="23" height="23" viewBox="0 0 22 22"><path d="M16.5 9.5V18.5H2.5V4.5H13" stroke="#e6e6e6" stroke-width="1.7" fill="none"/><path d="M6 9.5L9.8 13.5L18.5 3.2" stroke="#e6e6e6" stroke-width="2" fill="none"/></svg>
<div class="t" style="top:900.00px;font-size:18px;color:#e6e6e6;font-weight:400;line-height:30px;letter-spacing:-0.009px;left:357.3px;">Auto</div>
<div class="t" style="top:951.50px;font-size:18px;color:#6e6e6e;font-weight:400;line-height:30px;letter-spacing:-0.252px;right:1120.252px;">Max</div>
<div class="r" style="left:95.5px;top:947.3px;width:91.80000000000001px;height:38.40000000000009px;background:#1a1a1a;border-radius:2px;"></div>
<div class="r" style="left:107px;top:965.7px;width:10px;height:1.3999999999999773px;background:#4c4c4c;"></div>
<div class="r" style="left:120px;top:965.7px;width:10px;height:1.3999999999999773px;background:#4c4c4c;"></div>
<svg style="left:0;top:0" width="1" height="1"><path d="M169.1 959.25L174.6 953.75L180.1 959.25" stroke="#505050" stroke-width="1.6" fill="none" stroke-linecap="round" stroke-linejoin="round"/></svg>
<svg style="left:0;top:0" width="1" height="1"><path d="M169.1 973.75L174.6 979.25L180.1 973.75" stroke="#505050" stroke-width="1.6" fill="none" stroke-linecap="round" stroke-linejoin="round"/></svg>
<div class="r" style="left:199px;top:946.9px;width:117px;height:38.60000000000002px;background:#272727;border-radius:2px;"></div>
<svg style="left:0;top:0" width="1" height="1"><path d="M289.6 963.55L295.1 969.05L300.6 963.55" stroke="#505050" stroke-width="1.6" fill="none" stroke-linecap="round" stroke-linejoin="round"/></svg>
<svg style="left:328.6px;top:955.3px" width="23" height="23" viewBox="0 0 22 22"><path d="M16.5 9.5V18.5H2.5V4.5H13" stroke="#e6e6e6" stroke-width="1.7" fill="none"/><path d="M6 9.5L9.8 13.5L18.5 3.2" stroke="#e6e6e6" stroke-width="2" fill="none"/></svg>
<div class="t" style="top:951.50px;font-size:18px;color:#e6e6e6;font-weight:400;line-height:30px;letter-spacing:-0.009px;left:357.3px;">Auto</div>
<div class="t" style="top:900.00px;font-size:18px;color:#8c8c8c;font-weight:400;line-height:30px;letter-spacing:-0.212px;right:649.812px;">Pre-Recording</div>
<div class="r" style="left:566px;top:895.5px;width:97px;height:39.0px;background:#141414;border-radius:2px;"></div>
<div class="t" style="top:900.50px;font-size:19px;color:#fff;font-weight:400;line-height:30px;left:578px;">5 s</div>
<svg style="left:0;top:0" width="1" height="1"><path d="M645.6 907.9000000000001L651 902.5L656.4 907.9000000000001" stroke="#e6e6e6" stroke-width="1.8" fill="none" stroke-linecap="round" stroke-linejoin="round"/></svg>
<svg style="left:0;top:0" width="1" height="1"><path d="M645.6 922.3L651 927.7L656.4 922.3" stroke="#e6e6e6" stroke-width="1.8" fill="none" stroke-linecap="round" stroke-linejoin="round"/></svg>
<div class="t" style="top:951.50px;font-size:18px;color:#8c8c8c;font-weight:400;line-height:30px;letter-spacing:-0.004px;right:649.604px;">Post-Recording</div>
<div class="r" style="left:566px;top:947.0px;width:97px;height:39.0px;background:#141414;border-radius:2px;"></div>
<div class="t" style="top:952.00px;font-size:19px;color:#fff;font-weight:400;line-height:30px;left:578px;">5 s</div>
<svg style="left:0;top:0" width="1" height="1"><path d="M645.6 959.4000000000001L651 954.0L656.4 959.4000000000001" stroke="#e6e6e6" stroke-width="1.8" fill="none" stroke-linecap="round" stroke-linejoin="round"/></svg>
<svg style="left:0;top:0" width="1" height="1"><path d="M645.6 973.8L651 979.2L656.4 973.8" stroke="#e6e6e6" stroke-width="1.8" fill="none" stroke-linecap="round" stroke-linejoin="round"/></svg>
<div class="r" style="left:824px;top:895px;width:203px;height:39px;background:#333333;border-radius:2px;"></div>
<div class="t" style="top:900.00px;font-size:17.5px;color:#fff;font-weight:400;line-height:30px;letter-spacing:0.21px;left:725.105px;width:400px;text-align:center;-webkit-text-stroke:0.3px #fff;">Copy Schedule to...</div>
<div class="r" style="left:0px;top:1016px;width:1203px;height:2px;background:#141414;"></div>
<div class="r" style="left:0px;top:1018px;width:1203px;height:1px;background:#2a2a2a;"></div>
<div class="r" style="left:815px;top:1044px;width:114px;height:39px;background:#ffffff;border-radius:2px;"></div>
<div class="t" style="top:1048.60px;font-size:16.8px;color:#111;font-weight:400;line-height:30px;letter-spacing:-0.973px;left:671.5135px;width:400px;text-align:center;-webkit-text-stroke:0.5px #111;">OK</div>
<div class="r" style="left:942px;top:1044px;width:113px;height:39px;background:#262626;border-radius:2px;"></div>
<div class="t" style="top:1048.60px;font-size:18px;color:#6a6a6a;font-weight:400;line-height:30px;letter-spacing:0.119px;left:798.0595px;width:400px;text-align:center;-webkit-text-stroke:0.3px #6a6a6a;">Apply</div>
<div class="r" style="left:1067px;top:1044px;width:114px;height:39px;background:#333333;border-radius:2px;"></div>
<div class="t" style="top:1048.60px;font-size:18px;color:#fff;font-weight:400;line-height:30px;letter-spacing:-0.106px;left:923.2469999999998px;width:400px;text-align:center;-webkit-text-stroke:0.3px #fff;">Cancel</div>
</div></div></body></html>
